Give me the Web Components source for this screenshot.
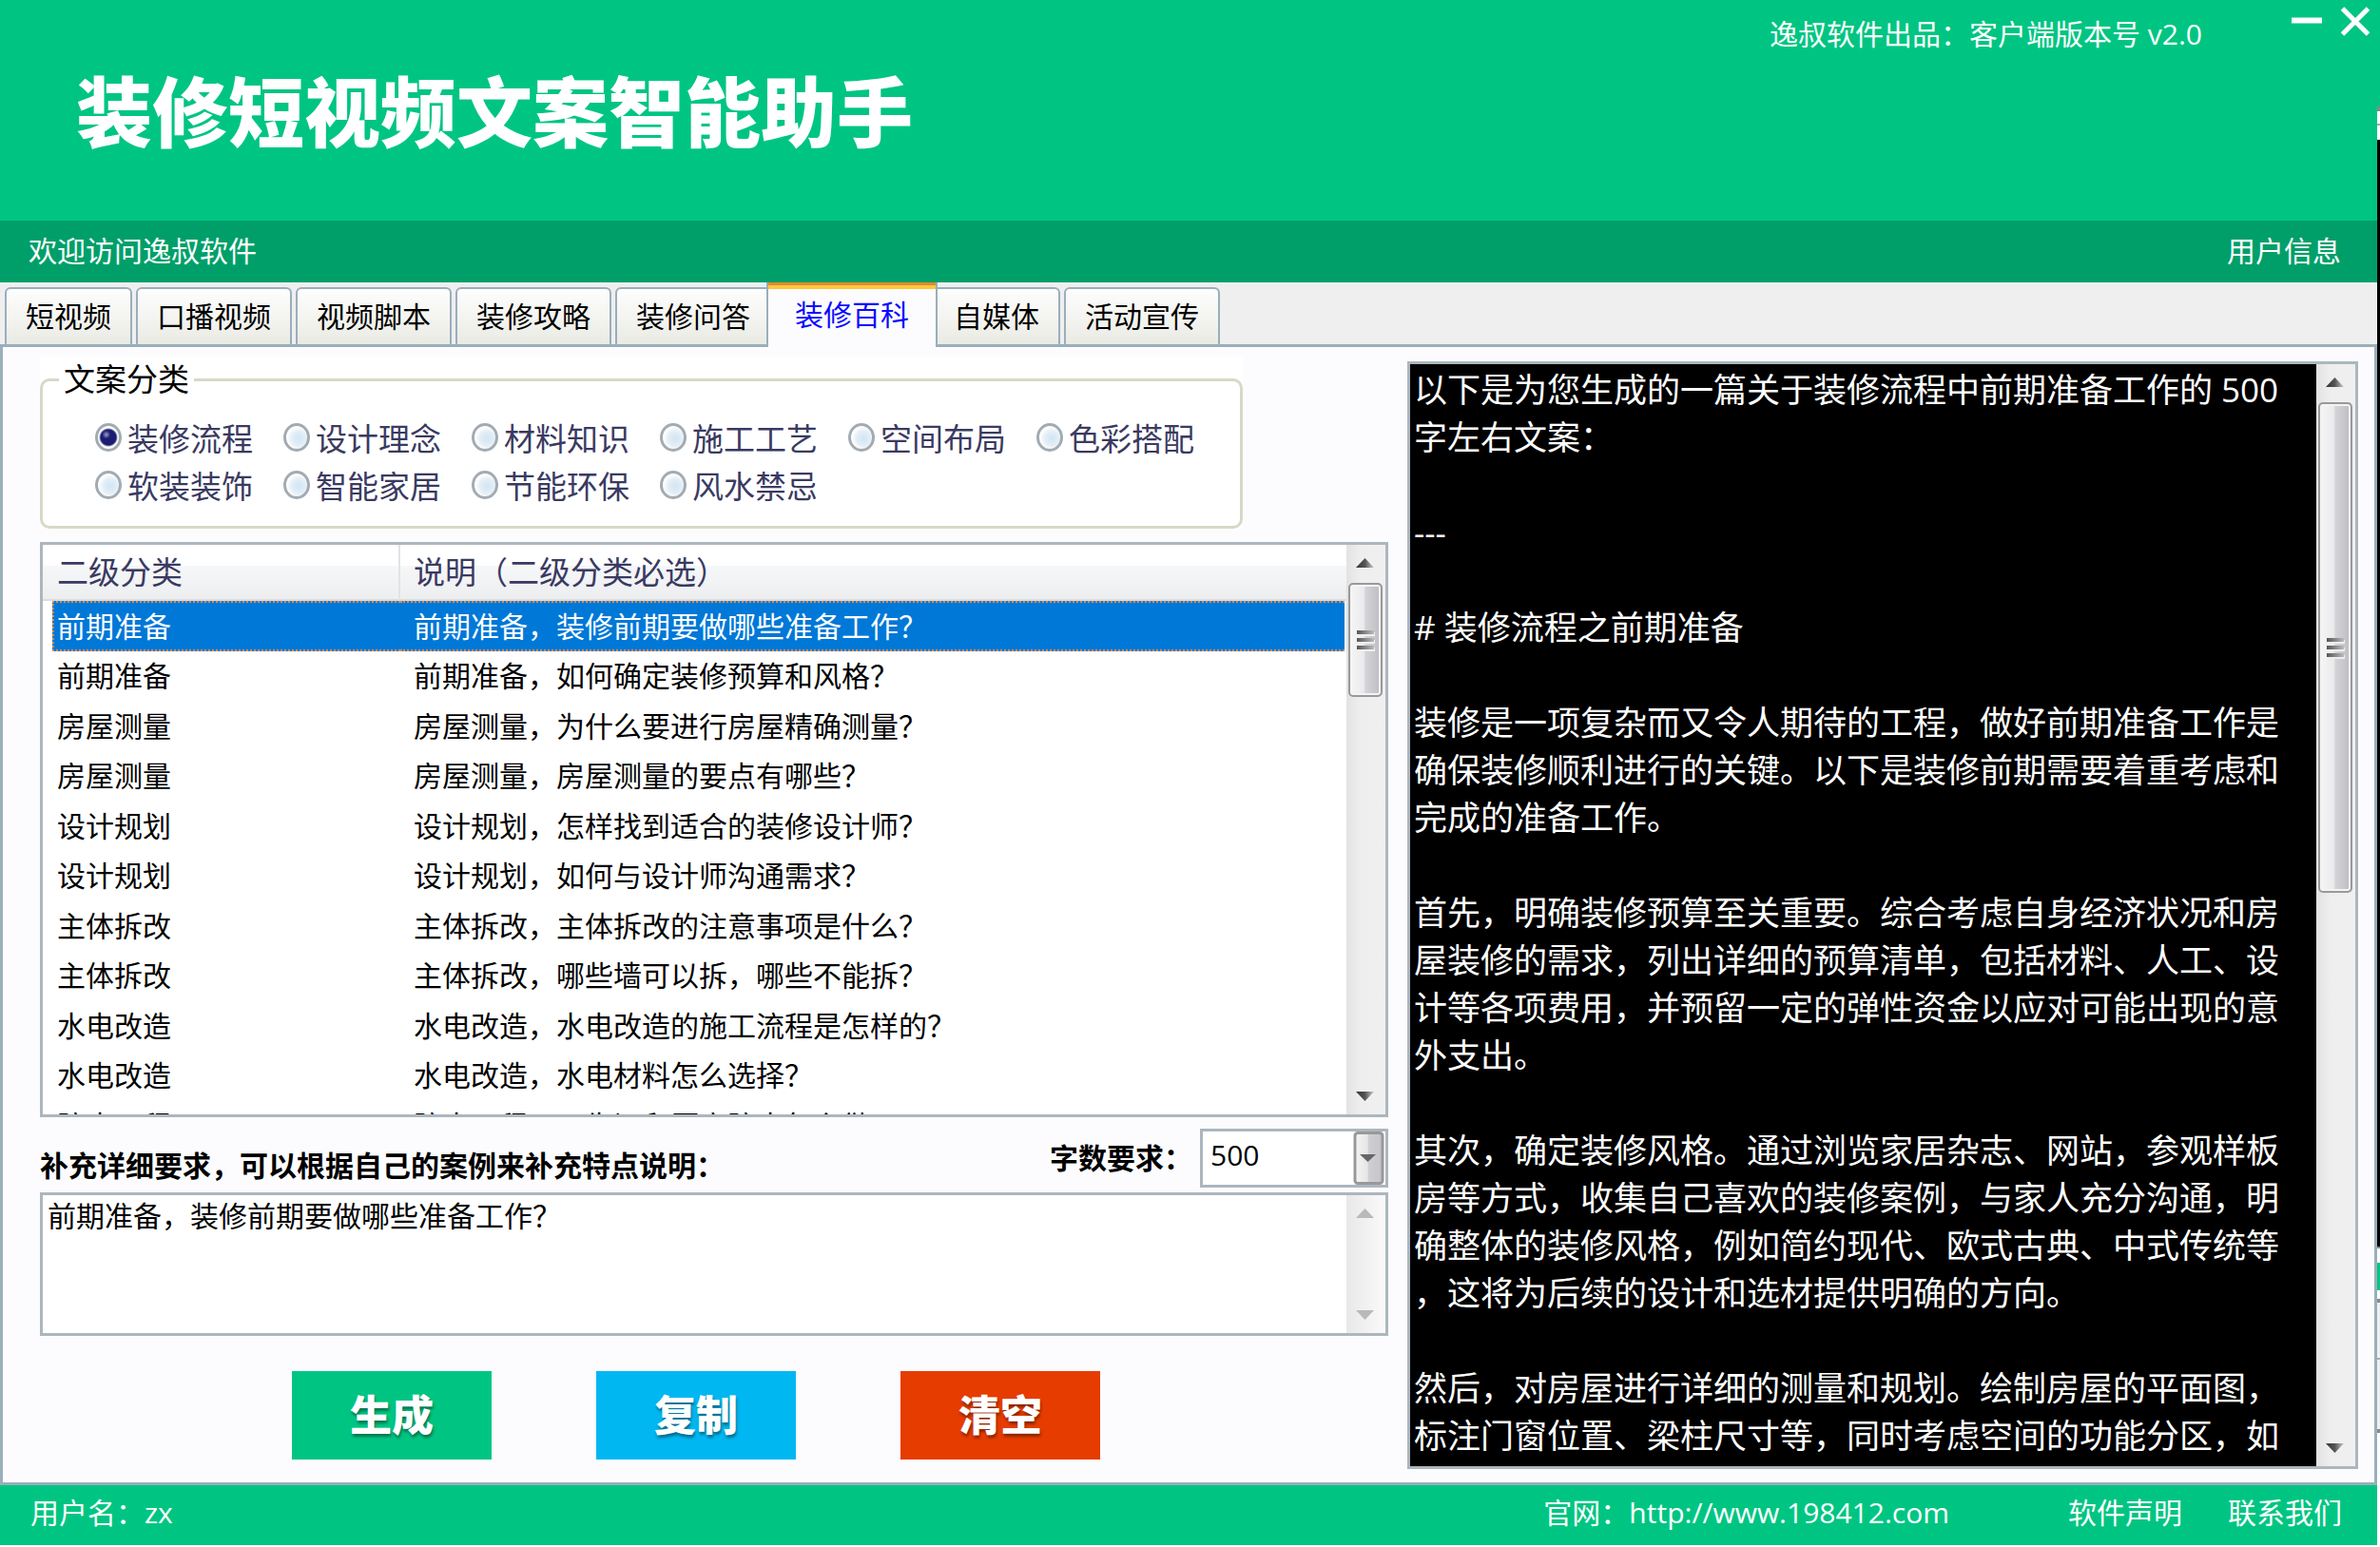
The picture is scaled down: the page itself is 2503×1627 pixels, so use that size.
<!DOCTYPE html>
<html lang="zh-CN">
<head>
<meta charset="utf-8">
<title>装修短视频文案智能助手</title>
<style>
  html { --green: #00c582; --green-dark: #009f69; --edge: #9aaebb; --field-edge: #acb6be; --surface: #fcfcfe; }
  body {
    margin: 0; background: #fff; color: #000;
    font: 30px/46px "Open Sans", "Noto Sans CJK SC", sans-serif;
    text-spacing-trim: space-all;
  }
</style>
</head>
<body>
<copy-assistant></copy-assistant>

<script>
const base = `
  *, *::before, *::after { box-sizing: border-box; }
  button, input, select, textarea { font: inherit; color: inherit; margin: 0; }
  button { border: 0; padding: 0; background: none; cursor: pointer; }
  a { color: inherit; text-decoration: none; }
`;

class BaseElement extends HTMLElement {
  connectedCallback() {
    if (this.shadowRoot) return;
    const root = this.attachShadow({ mode: "open" });
    root.innerHTML = `<style>${base}${this.styles()}</style>${this.render()}`;
  }
  styles() { return ""; }
  render() { return ""; }
}

/* Title banner with window controls */
customElements.define("title-banner", class extends BaseElement {
  styles() { return `
    :host { display: flex; justify-content: space-between; align-items: flex-start; height: 232px; background: var(--green); color: #fff; }
    h1 { margin: 0; align-self: center; padding: 2px 0 0 80px; font-size: 80px; line-height: 100px; font-weight: 900; }
    .tools { display: flex; align-items: flex-start; padding-right: 7px; }
    p { margin: 0 94px 0 0; padding-top: 13px; }
    .win { width: 32px; height: 44px; }
    .win + .win { margin-left: 19px; }
    svg { display: block; }
  `; }
  render() { return `
    <h1><slot></slot></h1>
    <div class="tools">
      <p><slot name="version"></slot></p>
      <button class="win" aria-label="最小化"><svg width="32" height="44"><path d="M0 21.5H32" stroke="#fff" stroke-width="6"/></svg></button>
      <button class="win" aria-label="关闭"><svg width="32" height="44"><path d="M2.500 9L29.500 36M29.500 9L2.500 36" stroke="#fff" stroke-width="5"/></svg></button>
    </div>`; }
});

/* Darker welcome strip */
customElements.define("welcome-bar", class extends BaseElement {
  styles() { return `
    :host { display: flex; justify-content: space-between; align-items: center; box-sizing: border-box; height: 65px; padding: 0 38px 2px 30px; background: var(--green-dark); color: #fff; }
  `; }
  render() { return `<slot></slot><a href="#user"><slot name="action"></slot></a>`; }
});

/* Row of tabs */
customElements.define("tab-strip", class extends BaseElement {
  styles() { return `
    :host { display: block; background: #efefef; position: relative; z-index: 1; }
    div { display: flex; align-items: flex-end; gap: 4px; height: 65px; padding-left: 5px; }
    button {
      height: 60px; padding: 0 20px; border: 2px solid var(--edge); border-bottom: 0; border-radius: 6px 6px 0 0;
      background: linear-gradient(#fdfdfd, #f4f5f1 50%, #e9eae3); line-height: 58px; white-space: nowrap;
    }
    button[aria-selected=true] {
      height: 68px; margin: 0 -9px -3px -9px; padding: 0 28px; position: relative; z-index: 1; color: #0a0aff; line-height: 66px;
      border-top: 0; border-radius: 0;
      background: linear-gradient(#e08a2c 3px, #ffc63c 3px 7px, var(--surface) 7px);
    }
  `; }
  render() {
    const on = this.getAttribute("selected");
    return `<div role="tablist">${this.getAttribute("tabs").split(",").map(t =>
      `<button role="tab" aria-selected="${t === on}">${t}</button>`).join("")}</div>`;
  }
});

/* Vertical scroll bar: arrows, thumb with grip */
customElements.define("scroll-rail", class extends BaseElement {
  styles() { return `
    :host { display: flex; flex-direction: column; flex: none; width: 41px; background: linear-gradient(to right, #e2e2e2, #eee 14px, #f0f0f0); }
    :host([disabled]) { background: linear-gradient(to right, #e8e8e8, #fafafa); }
    svg { display: block; flex: none; width: 41px; height: 40px; }
    .track { flex: 1; min-height: 0; }
    .thumb {
      display: flex; flex-direction: column; align-items: center; justify-content: center; gap: 4px;
      margin: 0 3px 0 2px; border: 2px solid #999; border-radius: 5px; box-shadow: inset 0 0 0 2px #f4f4f4;
      background: linear-gradient(to right, #f6f6f6, #eaeaec 45%, #d4d4d8 50%, #bcbcc2);
    }
    i { width: 18px; height: 4px; background: linear-gradient(to right, #555, #bbb); box-shadow: 1px 2px 0 #eee; }
  `; }
  render() {
    const off = this.hasAttribute("disabled");
    const size = this.getAttribute("thumb");
    const fill = off ? "#b9b9b9" : "url(#shade)";
    const defs = `<defs><linearGradient id="shade"><stop offset="0" stop-color="#333"/><stop offset=".5" stop-color="#555"/><stop offset="1" stop-color="#ccc"/></linearGradient></defs>`;
    return `
      <svg viewBox="0 0 41 40">${defs}<path d="M10 24L19.500 14L29 24Z" fill="${fill}"/></svg>
      <div class="track">${off ? "" : `<div class="thumb" style="height:${size}"><i></i><i></i><i></i></div>`}</div>
      <svg viewBox="0 0 41 40">${defs}<path d="M10 16L19.500 26L29 16Z" fill="${fill}"/></svg>`;
  }
});

/* Boxed set of radio buttons */
customElements.define("category-group", class extends BaseElement {
  styles() { return `
    :host { display: block; width: 1265px; padding-top: 2px; background: #fff; }
    fieldset { margin: 0; min-width: 0; border: 3px solid #d8d8c8; border-radius: 10px; padding: 16px 0 16px; }
    legend { margin-left: 17px; padding: 0 5px; font-size: 33px; line-height: 44px; }
    .options { display: grid; grid-template-columns: repeat(6, 198px); grid-auto-rows: 50px; padding-left: 55px; }
    label { display: flex; align-items: center; gap: 6px; font-size: 33px; color: #3a3a62; white-space: nowrap; }
    input {
      appearance: none; flex: none; width: 28px; height: 30px; margin-bottom: 4px; border: 3px solid #a3abb2; border-radius: 50%;
      background: radial-gradient(circle at 60% 55%, #cfe6f6, #e4eef6 40%, #fff 66%);
    }
    input:checked { background: radial-gradient(circle at 40% 38%, #9c9cd8, rgba(45, 45, 136, 0) 22%), radial-gradient(circle at 50% 50%, #1c1c70 8px, #fff 10px); }
  `; }
  render() {
    const on = this.getAttribute("selected");
    return `<fieldset><legend>${this.getAttribute("caption")}</legend><div class="options">${
      this.getAttribute("options").split(",").map((t, i) =>
        `<label for="r${i}"><input type="radio" name="cat" id="r${i}"${t === on ? " checked" : ""}><span>${t}</span></label>`).join("")
    }</div></fieldset>`;
  }
});

/* Two-column list with a selected row */
const rows = [
  ["前期准备", "装修前期要做哪些准备工作？"],
  ["前期准备", "如何确定装修预算和风格？"],
  ["房屋测量", "为什么要进行房屋精确测量？"],
  ["房屋测量", "房屋测量的要点有哪些？"],
  ["设计规划", "怎样找到适合的装修设计师？"],
  ["设计规划", "如何与设计师沟通需求？"],
  ["主体拆改", "主体拆改的注意事项是什么？"],
  ["主体拆改", "哪些墙可以拆，哪些不能拆？"],
  ["水电改造", "水电改造的施工流程是怎样的？"],
  ["水电改造", "水电材料怎么选择？"],
  ["防水工程", "卫生间和厨房防水怎么做？"]
];
customElements.define("topic-list", class extends BaseElement {
  styles() { return `
    :host { display: flex; border: 3px solid var(--field-edge); background: #fff; overflow: hidden; }
    .view { flex: 1; min-width: 0; overflow: hidden; }
    table { width: 100%; border-collapse: separate; border-spacing: 0; table-layout: fixed; }
    th {
      height: 59px; padding: 0 0 0 14px; text-align: left; font-weight: 400; font-size: 33px; line-height: 56px; color: #3a3a62;
      border-bottom: 2px solid #dcdcdc; background: linear-gradient(#fff 22px, #f6f7f9 22px, #edeef0);
    }
    th:first-child { width: 376px; padding-left: 15px; border-right: 2px solid #e2e3e5; }
    td { padding: 0; white-space: nowrap; }
    td div { padding-left: 14px; line-height: 52px; }
    tr:nth-child(odd) td div { line-height: 53px; }
    td:first-child { padding-left: 10px; }
    td:first-child div { padding-left: 5px; }
    td:last-child { padding-right: 2px; }
    .on div { color: #fff; background: #0078d7; border: 0 dotted #e08a48; border-width: 2px 0; }
    tr.on:nth-child(odd) td div { line-height: 49px; }
    .on td:first-child div { border-left-width: 2px; padding-left: 3px; }
  `; }
  render() { return `
    <div class="view"><table>
      <thead><tr><th scope="col">二级分类</th><th scope="col">说明（二级分类必选）</th></tr></thead>
      <tbody>${rows.map(([a, b], i) => `<tr${i ? "" : ' class="on"'}><td><div>${a}</div></td><td><div>${a}，${b}</div></td></tr>`).join("")}</tbody>
    </table></div>
    <scroll-rail thumb="120px"></scroll-rail>`; }
});

/* Extra requirements: caption row, word count, text box */
customElements.define("request-form", class extends BaseElement {
  styles() { return `
    :host { display: block; }
    .row { display: flex; justify-content: space-between; height: 62px; margin-bottom: 5px; }
    label { font-weight: 700; white-space: nowrap; }
    .row > label { align-self: flex-end; }
    .count { display: flex; align-items: center; gap: 8px; }
    .pick { position: relative; width: 198px; height: 62px; }
    select { appearance: none; width: 100%; height: 100%; padding: 0 40px 6px 8px; border: 3px solid var(--field-edge); border-radius: 0; background: #fff; }
    .pick svg { position: absolute; right: 3px; top: 3px; pointer-events: none; }
    .box { display: flex; height: 151px; border: 3px solid var(--field-edge); background: #fff; }
    textarea { flex: 1; min-width: 0; border: 0; outline: 0; resize: none; overflow: hidden; padding: 0 5px; line-height: 44px; background: none; }
  `; }
  render() { return `
    <div class="row">
      <label for="extra">补充详细要求，可以根据自己的案例来补充特点说明：</label>
      <div class="count">
        <label for="words">字数要求：</label>
        <div class="pick">
          <select id="words"><option>500</option><option>800</option><option>1000</option></select>
          <svg width="34" height="56"><defs><linearGradient id="g"><stop offset="0" stop-color="#f4f4f4"/><stop offset=".45" stop-color="#e6e6e8"/><stop offset=".5" stop-color="#d0d0d4"/><stop offset="1" stop-color="#c4c4c8"/></linearGradient></defs>
          <rect x="2" y="1.500" width="29" height="53" rx="3" fill="url(#g)" stroke="#999" stroke-width="3"/><path d="M7 24H24L15.500 32Z" fill="#666"/></svg>
        </div>
      </div>
    </div>
    <div class="box"><textarea id="extra">前期准备，装修前期要做哪些准备工作？</textarea><scroll-rail disabled></scroll-rail></div>`; }
});

/* Flat coloured button */
customElements.define("flat-button", class extends BaseElement {
  styles() { return `
    :host { display: block; }
    button { width: 210px; height: 93px; background: var(--fill); color: #fff; font-size: 44px; line-height: 93px; font-weight: 900; text-shadow: 1px 3px 3px rgba(0, 0, 0, .4); }
  `; }
  render() { return `<button type="button"><slot></slot></button>`; }
});

/* Generated copy on black */
customElements.define("result-view", class extends BaseElement {
  styles() { return `
    :host { display: flex; border: 3px solid var(--field-edge); background: #000; color: #fff; overflow: hidden; }
    .text { flex: 1; min-width: 0; padding: 2px 0 0 4px; overflow: hidden; white-space: pre; font-size: 35px; line-height: 50px; }
  `; }
  render() { return `<div class="text">${[
    "以下是为您生成的一篇关于装修流程中前期准备工作的 500",
    "字左右文案：",
    "",
    "---",
    "",
    "# 装修流程之前期准备",
    "",
    "装修是一项复杂而又令人期待的工程，做好前期准备工作是",
    "确保装修顺利进行的关键。以下是装修前期需要着重考虑和",
    "完成的准备工作。",
    "",
    "首先，明确装修预算至关重要。综合考虑自身经济状况和房",
    "屋装修的需求，列出详细的预算清单，包括材料、人工、设",
    "计等各项费用，并预留一定的弹性资金以应对可能出现的意",
    "外支出。",
    "",
    "其次，确定装修风格。通过浏览家居杂志、网站，参观样板",
    "房等方式，收集自己喜欢的装修案例，与家人充分沟通，明",
    "确整体的装修风格，例如简约现代、欧式古典、中式传统等",
    "，这将为后续的设计和选材提供明确的方向。",
    "",
    "然后，对房屋进行详细的测量和规划。绘制房屋的平面图，",
    "标注门窗位置、梁柱尺寸等，同时考虑空间的功能分区，如"
  ].join("\n")}</div><scroll-rail thumb="516px"></scroll-rail>`; }
});

/* Footer */
customElements.define("status-bar", class extends BaseElement {
  styles() { return `
    :host { display: flex; align-items: flex-start; height: 63px; padding: 0 37px 0 32px; background: var(--green); color: #fff; line-height: 58px; }
    span { flex: 1; }
    .site { margin-right: 125px; }
    .about { margin-right: 48px; }
  `; }
  render() { return `
    <span>用户名：zx</span>
    <a class="site" href="http://www.198412.com">官网：http://www.198412.com</a>
    <a class="about" href="#about">软件声明</a>
    <a href="#contact">联系我们</a>`; }
});

/* Whole window */
customElements.define("copy-assistant", class extends BaseElement {
  styles() { return `
    :host { display: flex; box-sizing: border-box; height: 100vh; padding-bottom: 2px; }
    .window { flex: 1; min-width: 0; display: flex; flex-direction: column; }
    .behind {
      width: 3px;
      background: linear-gradient(var(--green) 112px, #888 112px 117px, #fff 117px 130px, #aaa 130px 132px, #fff 132px 147px, #000 147px 1311px,
        #888 1311px 1313px, #fff 1313px 1328px, var(--green) 1328px 1357px, #fff 1357px 1366px, #888 1366px 1370px, #f0f0f0 1370px 1428px,
        #aaa 1428px 1430px, #f0f0f0 1430px 1503px, #888 1503px 1507px, #fff 1507px);
    }
    main {
      flex: 1; min-height: 0; display: grid; gap: 20px; grid-template: minmax(0, 1fr) / minmax(0, 1418fr) minmax(0, 1000fr);
      padding: 10px 17px 14px 39px; border: 3px solid var(--edge); background: var(--surface);
    }
    .left { display: flex; flex-direction: column; }
    result-view { margin-top: 5px; }
    topic-list { flex: 1; min-height: 0; margin: 14px 0 12px; }
    .actions { display: flex; gap: 110px; margin: 37px 0 10px; padding-left: 265px; }
  `; }
  render() { return `
    <div class="window">
      <title-banner>装修短视频文案智能助手<span slot="version">逸叔软件出品：客户端版本号 v2.0</span></title-banner>
      <welcome-bar>欢迎访问逸叔软件<span slot="action">用户信息</span></welcome-bar>
      <tab-strip tabs="短视频,口播视频,视频脚本,装修攻略,装修问答,装修百科,自媒体,活动宣传" selected="装修百科"></tab-strip>
      <main>
        <div class="left">
          <category-group caption="文案分类" selected="装修流程"
            options="装修流程,设计理念,材料知识,施工工艺,空间布局,色彩搭配,软装装饰,智能家居,节能环保,风水禁忌"></category-group>
          <topic-list></topic-list>
          <request-form></request-form>
          <div class="actions">
            <flat-button style="--fill: #00c582">生成</flat-button>
            <flat-button style="--fill: #00b7f1">复制</flat-button>
            <flat-button style="--fill: #e63c00">清空</flat-button>
          </div>
        </div>
        <result-view></result-view>
      </main>
      <status-bar></status-bar>
    </div>
    <div class="behind"></div>`; }
});
</script>
</body>
</html>
